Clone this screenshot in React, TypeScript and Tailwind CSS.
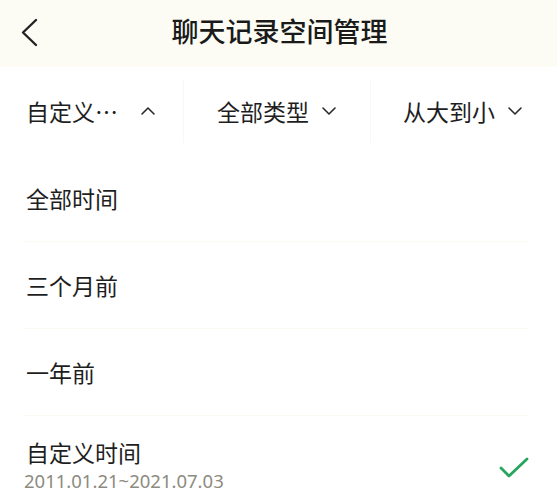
import React from "react";

const font = { fontFamily: '"Noto Sans CJK SC", "Noto Sans", sans-serif' };

function Chevron({ up }: { up?: boolean }) {
  return (
    <svg width="16" height="10" viewBox="0 0 16 10" className="shrink-0">
      <polyline
        points={up ? "2,8 8,2 14,8" : "2,2 8,8 14,2"}
        fill="none"
        stroke="#2a2a2a"
        strokeWidth="1.6"
        strokeLinecap="round"
        strokeLinejoin="round"
      />
    </svg>
  );
}

function Row({ label }: { label: string }) {
  return (
    <div className="pl-[23px] pr-[29px]">
      <div className="h-[87px] flex items-center pl-[3px] text-[23px] text-[#1e1e1e] border-b border-[#fafaf0]">
        {label}
      </div>
    </div>
  );
}

export default function App() {
  return (
    <div className="w-[557px] h-[500px] overflow-hidden bg-white" style={font}>
      <div className="h-[67px] bg-[#fcfcf4] flex items-center relative pb-[6px]">
        <svg width="40" height="40" viewBox="0 0 40 40" className="absolute left-[10px] top-[12px]">
          <polyline
            points="26,8 13,20.5 26,33"
            fill="none"
            stroke="#222"
            strokeWidth="2.4"
            strokeLinecap="round"
            strokeLinejoin="round"
          />
        </svg>
        <div className="w-full text-center text-[27px] font-medium text-[#1a1a1a] leading-none pl-[2px]">聊天记录空间管理</div>
      </div>
      <div className="h-[88px] flex items-center">
        <div className="w-[183px] h-full flex items-center pl-[26px] gap-[22px]">
          <span className="text-[23px] text-[#1e1e1e]">自定义…</span>
          <Chevron up />
        </div>
        <div className="w-px h-[64px] bg-[#f8f8ef]" />
        <div className="w-[186px] h-full flex items-center pl-[33px] gap-[12px]">
          <span className="text-[23px] text-[#1e1e1e]">全部类型</span>
          <Chevron />
        </div>
        <div className="w-px h-[64px] bg-[#f8f8ef]" />
        <div className="flex-1 h-full flex items-center pl-[32px] gap-[12px]">
          <span className="text-[23px] text-[#1e1e1e]">从大到小</span>
          <Chevron />
        </div>
      </div>
      <Row label="全部时间" />
      <Row label="三个月前" />
      <Row label="一年前" />
      <div className="pl-[26px] pr-[27px] pt-[20px] flex items-center justify-between">
        <div className="flex flex-col">
          <span className="text-[23px] text-[#1e1e1e] leading-[32px]">自定义时间</span>
          <span className="text-[18.5px] text-[#8d8b80] leading-[26px] -ml-[2px]" style={{ fontFamily: '"Noto Sans", sans-serif' }}>
            2011.01.21~2021.07.03
          </span>
        </div>
        <svg width="32" height="26" viewBox="0 0 32 26" className="mt-[5px]">
          <polyline
            points="3,13 11,21 29,4"
            fill="none"
            stroke="#25a55d"
            strokeWidth="2.8"
            strokeLinecap="round"
            strokeLinejoin="round"
          />
        </svg>
      </div>
    </div>
  );
}
